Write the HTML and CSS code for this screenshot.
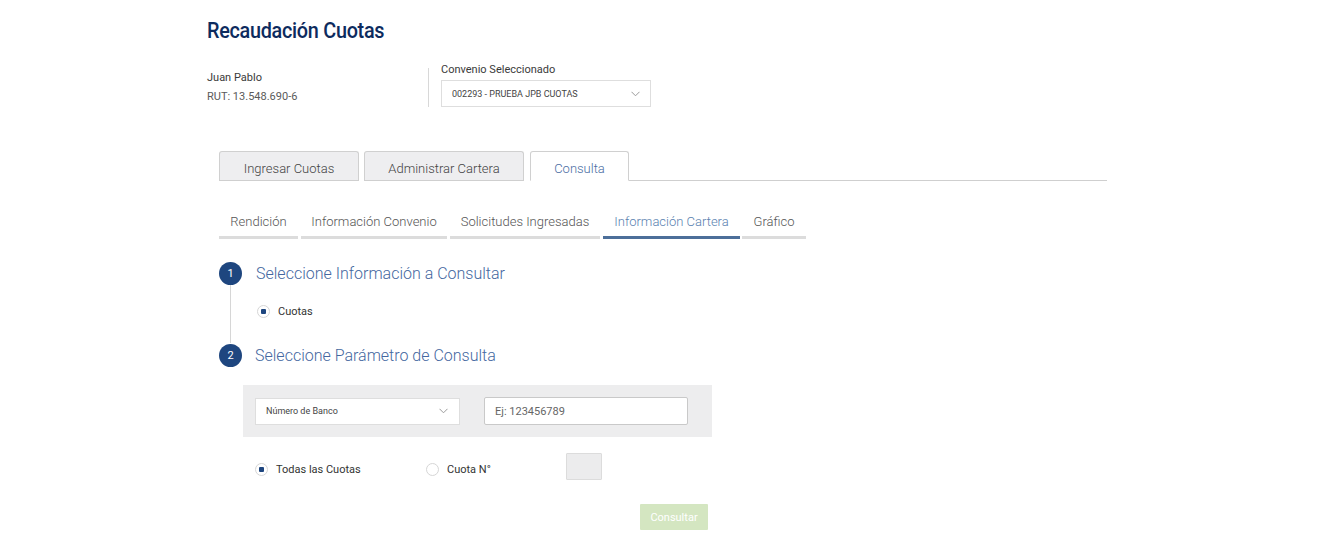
FILE: index.html
```html
<!DOCTYPE html>
<html lang="es">
<head>
<meta charset="utf-8">
<title>Recaudación Cuotas</title>
<link rel="stylesheet" href="styles.css">
</head>
<body>
<div class="page">
  <h1 class="title">Recaudación Cuotas</h1>
  <div class="header">
    <div class="user">
      <div class="user-name">Juan Pablo</div>
      <div class="user-rut">RUT: 13.548.690-6</div>
    </div>
    <div class="divider"></div>
    <div class="convenio">
      <div class="convenio-label">Convenio Seleccionado</div>
      <div class="select select-convenio">
        <span>002293 - PRUEBA JPB CUOTAS</span>
        <svg class="chev" width="9" height="6" viewBox="0 0 9 6"><path d="M0.5 0.8 L4.5 4.8 L8.5 0.8" fill="none" stroke="#9a9a9a" stroke-width="1"/></svg>
      </div>
    </div>
  </div>

  <div class="tabs">
    <div class="tab">Ingresar Cuotas</div>
    <div class="tab tab-2">Administrar Cartera</div>
    <div class="tab tab-active">Consulta</div>
    <div class="tab-rest"></div>
  </div>

  <div class="subtabs">
    <div class="subtab st-1">Rendición</div>
    <div class="subtab st-2">Información Convenio</div>
    <div class="subtab st-3">Solicitudes Ingresadas</div>
    <div class="subtab st-4 subtab-active">Información Cartera</div>
    <div class="subtab st-5">Gráfico</div>
  </div>

  <div class="steps">
    <div class="step step-1">
      <div class="step-head">
        <div class="step-num">1</div>
        <div class="step-title">Seleccione Información a Consultar</div>
      </div>
      <div class="step-body body-1">
        <label class="radio"><span class="dot dot-on"></span>Cuotas</label>
      </div>
    </div>
    <div class="step step-2">
      <div class="step-head">
        <div class="step-num">2</div>
        <div class="step-title">Seleccione Parámetro de Consulta</div>
      </div>
      <div class="panel">
        <div class="select select-banco">
          <span>Número de Banco</span>
          <svg class="chev" width="9" height="6" viewBox="0 0 9 6"><path d="M0.5 0.8 L4.5 4.8 L8.5 0.8" fill="none" stroke="#9a9a9a" stroke-width="1"/></svg>
        </div>
        <div class="input">Ej: 123456789</div>
      </div>
      <div class="options">
        <label class="radio radio-todas"><span class="dot dot-on"></span>Todas las Cuotas</label>
        <label class="radio radio-cuota"><span class="dot"></span>Cuota N°</label>
        <div class="small-box"></div>
      </div>
      <div class="actions">
        <button class="btn">Consultar</button>
      </div>
    </div>
  </div>
</div>
</body>
</html>
```
FILE: styles.css
```css
* { box-sizing: border-box; }
html, body { margin: 0; padding: 0; background: #fff; }
body { font-family: Roboto, "Liberation Sans", sans-serif; color: #333; }

.page { padding-left: 207px; padding-top: 17px; width: 1331px; }

.title {
  margin: 0;
  font-size: 22px;
  font-weight: 500;
  color: #0d2b5e;
  letter-spacing: -0.3px;
  line-height: 28px;
  transform: scaleX(0.9);
  transform-origin: left center;
}

.header { display: flex; align-items: flex-start; margin-top: 18px; height: 72px; }
.user { width: 221px; padding-top: 8px; }
.user-name { font-size: 11px; color: #3a3a3a; line-height: 14px; }
.user-rut { font-size: 11px; color: #5a5a5a; line-height: 14px; margin-top: 5px; }
.divider { width: 1px; height: 39px; background: #d8d8d8; margin-top: 5px; }
.convenio { margin-left: 12px; }
.convenio-label { font-size: 11px; color: #3a3a3a; line-height: 14px; }
.select {
  display: flex; align-items: center; justify-content: space-between;
  background: #fff; border: 1px solid #dedede;
  font-size: 9px; color: #444;
}
.select-convenio { width: 210px; height: 27px; margin-top: 3px; padding: 0 10px 0 10px; }
.chev { display: block; }

.tabs { display: flex; align-items: flex-end; margin-left: 12px; width: 888px; height: 30px; margin-top: 16px; }
.tab {
  height: 30px; border: 1px solid #d0d0d0; border-bottom: 1px solid #cfcfcf;
  border-radius: 3px 3px 0 0; background: #eeeef0;
  font-size: 13px; font-weight: 300; color: #444; display: flex; align-items: center; justify-content: center;
  padding-top: 5px;
}
.tab:nth-child(1) { width: 140px; }
.tab-2 { width: 160px; margin-left: 5px; }
.tab-active { width: 99px; margin-left: 6px; background: #fff; border-bottom-color: #fff; color: #4a6ea3; }
.tab-rest { flex: 1; border-bottom: 1px solid #cfcfcf; height: 1px; }

.subtabs { display: flex; margin-left: 12px; margin-top: 31px; gap: 3px; }
.subtab {
  font-size: 13px; font-weight: 300; color: #555; text-align: center;
  height: 27px; border-bottom: 3px solid #dcdcdc; line-height: 20px;
}
.st-1 { width: 79px; }
.st-2 { width: 146px; }
.st-3 { width: 150px; }
.st-4 { width: 137px; }
.st-5 { width: 64px; margin-left: -1px; }
.subtab-active { color: #5a7fb0; border-bottom-color: #4d6f9a; }

.steps { margin-left: 12px; margin-top: 22px; }
.step-head { display: flex; align-items: center; height: 24px; }
.step-num {
  width: 23px; height: 23px; border-radius: 50%; background: #1e467f; color: #fff;
  font-size: 11px; display: flex; align-items: center; justify-content: center;
}
.step-title { margin-left: 14px; font-size: 16px; font-weight: 300; color: #4467a0; }
.step-2 .step-title { margin-left: 13px; }

.body-1 {
  margin-left: 11px; border-left: 1px solid #d6d6d6;
  height: 58px; padding-top: 20px; padding-left: 26px;
}
.radio { display: flex; align-items: center; font-size: 11px; color: #333; }
.dot {
  width: 13px; height: 13px; border-radius: 50%; border: 1px solid #d6d6d6; background: #fff;
  display: inline-flex; align-items: center; justify-content: center; margin-right: 8px;
}
.dot-on::after { content: ""; width: 5px; height: 5px; background: #1e467f; border-radius: 1px; }

.panel {
  margin-left: 24px; margin-top: 18px; width: 469px; height: 52px; background: #ededee;
  display: flex; align-items: center; padding-left: 12px; gap: 24px;
}
.select-banco { width: 205px; height: 27px; padding: 0 11px 0 10px; }
.input {
  width: 204px; height: 28px; background: #fff; border: 1px solid #c9c9c9; border-radius: 2px;
  font-size: 11px; color: #666; display: flex; align-items: center; padding-left: 10px;
}

.options { display: flex; align-items: flex-start; margin-left: 36px; margin-top: 16px; height: 27px; }
.radio-todas { width: 170px; margin-top: 10px; }
.radio-cuota { width: 140px; margin-top: 10px; margin-left: 1px; }
.small-box { width: 36px; height: 27px; background: #ececed; border: 1px solid #dcdcdc; border-radius: 1px; }

.actions { margin-left: 421px; margin-top: 24px; }
.btn {
  width: 68px; height: 26px; background: #d4e6c1; border: 0; border-radius: 1px;
  color: #fff; font-family: Roboto, "Liberation Sans", sans-serif; font-size: 11px; padding: 0;
}
```
